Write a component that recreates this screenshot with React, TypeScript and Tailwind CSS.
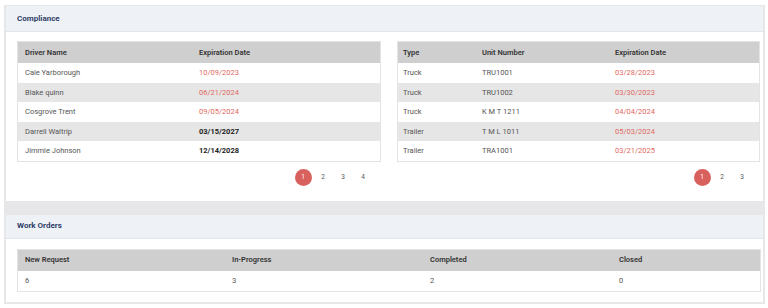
const drivers = [
  { name: "Cale Yarborough", date: "10/09/2023", expired: true },
  { name: "Blake quinn", date: "06/21/2024", expired: true },
  { name: "Cosgrove Trent", date: "09/05/2024", expired: true },
  { name: "Darrell Waltrip", date: "03/15/2027", expired: false },
  { name: "Jimmie Johnson", date: "12/14/2028", expired: false },
];

const units = [
  { type: "Truck", unit: "TRU1001", date: "03/28/2023" },
  { type: "Truck", unit: "TRU1002", date: "03/30/2023" },
  { type: "Truck", unit: "K M T 1211", date: "04/04/2024" },
  { type: "Trailer", unit: "T M L 1011", date: "05/03/2024" },
  { type: "Trailer", unit: "TRA1001", date: "03/21/2025" },
];

const Pager = ({ pages }: { pages: number }) => (
  <div className="mt-[6px] flex justify-end pr-[8px]">
    {Array.from({ length: pages }, (_, i) => i + 1).map((p) => (
      <div key={p} className="flex h-[20px] w-[20px] items-center justify-center">
        {p === 1 ? (
          <span className="flex h-[17px] w-[17px] items-center justify-center rounded-full bg-[#d9615d] text-[6.5px] text-white">
            1
          </span>
        ) : (
          <span className="text-[6.5px] text-[#555]">{p}</span>
        )}
      </div>
    ))}
  </div>
);

const CardHeader = ({ title, h }: { title: string; h: string }) => (
  <div className={`flex ${h} items-center border-b border-[#e2e6ea] bg-[#eef2f6] px-[11px]`}>
    <h2 className="text-[8px] font-bold text-[#2f3e68]">{title}</h2>
  </div>
);

export default function App() {
  return (
    <div className="h-[308px] bg-white pt-[5px] pl-[4px] pr-[3px] text-[7.5px] text-[#333]" style={{ fontFamily: "Roboto, 'Noto Sans', sans-serif" }}>
      <div className="bg-[#e7e7e9] px-[2px] pt-[1px] pb-[2px]">
        <div className="bg-white">
          <CardHeader title="Compliance" h="h-[26px]" />
          <div className="flex gap-[16px] pl-[11px] pr-[2px] pt-[9px] pb-[13px]">
            <div className="w-[364px]">
              <div className="border border-[#e3e3e3]">
                <div className="flex h-[21px] items-center bg-[#cfcfcf] px-[7px] font-semibold text-[#333]">
                  <div className="w-[174px]">Driver Name</div>
                  <div>Expiration Date</div>
                </div>
                {drivers.map((d, i) => (
                  <div key={d.name} className={`flex h-[19.5px] items-center px-[7px] ${i % 2 ? "bg-[#e6e6e6]" : "bg-white"}`}>
                    <div className="w-[174px] text-[#555]">{d.name}</div>
                    <div className={d.expired ? "text-[#df6a62]" : "font-bold text-[#222]"}>{d.date}</div>
                  </div>
                ))}
              </div>
              <Pager pages={4} />
            </div>
            <div className="w-[363px]">
              <div className="border border-[#e3e3e3]">
                <div className="flex h-[21px] items-center bg-[#cfcfcf] px-[5px] font-semibold text-[#333]">
                  <div className="w-[79px]">Type</div>
                  <div className="w-[133px]">Unit Number</div>
                  <div>Expiration Date</div>
                </div>
                {units.map((u, i) => (
                  <div key={u.unit} className={`flex h-[19.5px] items-center px-[5px] ${i % 2 ? "bg-[#e6e6e6]" : "bg-white"}`}>
                    <div className="w-[79px] text-[#555]">{u.type}</div>
                    <div className="w-[133px] text-[#555]">{u.unit}</div>
                    <div className="text-[#df6a62]">{u.date}</div>
                  </div>
                ))}
              </div>
              <Pager pages={3} />
            </div>
          </div>
        </div>

        <div className="h-[14px]" />

        <div className="bg-white">
          <CardHeader title="Work Orders" h="h-[24px]" />
          <div className="pl-[11px] pr-[2px] pt-[10px] pb-[10px]">
            <div className="border border-[#e3e3e3]">
              <div className="flex h-[21px] items-center bg-[#cfcfcf] px-[7px] font-semibold text-[#333]">
                <div className="w-[207px]">New Request</div>
                <div className="w-[198px]">In-Progress</div>
                <div className="w-[189px]">Completed</div>
                <div>Closed</div>
              </div>
              <div className="flex h-[20px] items-center bg-white px-[7px] text-[#555]">
                <div className="w-[207px]">6</div>
                <div className="w-[198px]">3</div>
                <div className="w-[189px]">2</div>
                <div>0</div>
              </div>
            </div>
          </div>
        </div>
      </div>
    </div>
  );
}
